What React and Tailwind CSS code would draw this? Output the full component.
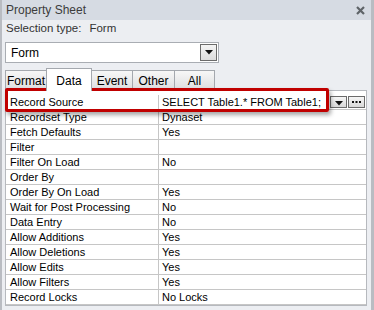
import React from "react";

const rows = [
  ["Record Source", "SELECT Table1.* FROM Table1;"],
  ["Recordset Type", "Dynaset"],
  ["Fetch Defaults", "Yes"],
  ["Filter", ""],
  ["Filter On Load", "No"],
  ["Order By", ""],
  ["Order By On Load", "Yes"],
  ["Wait for Post Processing", "No"],
  ["Data Entry", "No"],
  ["Allow Additions", "Yes"],
  ["Allow Deletions", "Yes"],
  ["Allow Edits", "Yes"],
  ["Allow Filters", "Yes"],
  ["Record Locks", "No Locks"],
];

const tabs = [
  { name: "Format", w: "w-[42px]" },
  { name: "Data", w: "w-[46px]", active: true },
  { name: "Event", w: "w-[42px]" },
  { name: "Other", w: "w-[43px]" },
  { name: "All", w: "w-[41px]" },
];

function Arrow() {
  return (
    <svg width="8" height="5" viewBox="0 0 8 5">
      <path d="M0 0 H8 L4 4.5 Z" fill="#111" />
    </svg>
  );
}

export default function App() {
  return (
    <div
      className="relative w-[374px] h-[310px] overflow-hidden bg-[#eceef2] border-l-[2px] border-r-[3px] border-[#b9bcc2] text-black"
      style={{ fontFamily: '"Liberation Sans", Arial, sans-serif' }}
    >
      {/* title bar */}
      <div className="h-[20px] bg-[#d6dbe3] flex items-center justify-between pl-[4px] pr-[6px]">
        <span className="text-[12px] text-[#3c3c3c]">Property Sheet</span>
        <svg width="9" height="9" viewBox="0 0 9 9">
          <path d="M1 1 L8 8 M8 1 L1 8" stroke="#5f6468" strokeWidth="2.2" />
        </svg>
      </div>
      {/* selection type */}
      <div className="h-[18px] flex items-center pl-[4px] text-[11.5px] text-[#333]">
        <span>Selection type:</span>
        <span className="ml-[8px]">Form</span>
      </div>
      {/* dropdown */}
      <div className="ml-[3px] mt-[4px] w-[214px] h-[21px] bg-white border border-[#a9adb3] flex items-center">
        <span className="pl-[5px] text-[12px] flex-1">Form</span>
        <div className="w-[17px] h-[17px] mr-[1px] border border-[#6b6b6b] bg-gradient-to-b from-[#f4f4f4] to-[#dcdcdc] flex items-center justify-center">
          <Arrow />
        </div>
      </div>
      {/* tabs */}
      <div className="ml-[3px] mt-[4px] h-[23px] flex items-end">
        {tabs.map((t) =>
          t.active ? (
            <div
              key={t.name}
              className={`${t.w} h-[23px] -mb-[1px] -ml-[1px] relative z-10 bg-white border border-b-0 border-[#a4a8ae] flex items-start justify-center pt-[3px] text-[12px]`}
            >
              {t.name}
            </div>
          ) : (
            <div
              key={t.name}
              className={`${t.w} h-[20px] bg-gradient-to-b from-[#f7f7f7] to-[#dedfe1] border border-[#a4a8ae] -ml-[1px] first:ml-0 flex items-center justify-center pt-[1px] text-[12px]`}
            >
              {t.name}
            </div>
          )
        )}
      </div>
      {/* grid */}
      <div className="ml-[3px] w-[362px] bg-white border border-[#b6b9be] pt-[4px]">
        {rows.map(([k, v], i) => (
          <div key={k} className="h-[15px] flex border-b border-[#c6c6c6] text-[11px] leading-[14px]">
            <div className="w-[153px] pl-[4px] border-r border-[#c6c6c6] whitespace-nowrap overflow-hidden">{k}</div>
            <div className="flex-1 pl-[3px] flex items-center whitespace-nowrap">
              <span className="flex-1">{v}</span>
              {i === 0 && (
                <div className="flex gap-[1px] mr-[1px]">
                  <div className="w-[17px] h-[12px] border border-[#6b6b6b] bg-gradient-to-b from-[#f6f6f6] to-[#d8d8d8] flex items-end justify-center pb-[1px]">
                    <Arrow />
                  </div>
                  <div className="w-[17px] h-[12px] border border-[#6b6b6b] bg-gradient-to-b from-[#f6f6f6] to-[#d8d8d8] flex items-center justify-center">
                    <svg width="9" height="2" viewBox="0 0 9 2">
                      <rect x="0" y="0" width="2" height="2" fill="#111" />
                      <rect x="3.5" y="0" width="2" height="2" fill="#111" />
                      <rect x="7" y="0" width="2" height="2" fill="#111" />
                    </svg>
                  </div>
                </div>
              )}
            </div>
          </div>
        ))}
      </div>
      {/* annotation */}
      <div className="absolute left-[3px] top-[88px] w-[324px] h-[24px] border-[3px] border-[#c00000] rounded-[2px] shadow-[2px_3px_4px_rgba(0,0,0,0.35)]" />
    </div>
  );
}
